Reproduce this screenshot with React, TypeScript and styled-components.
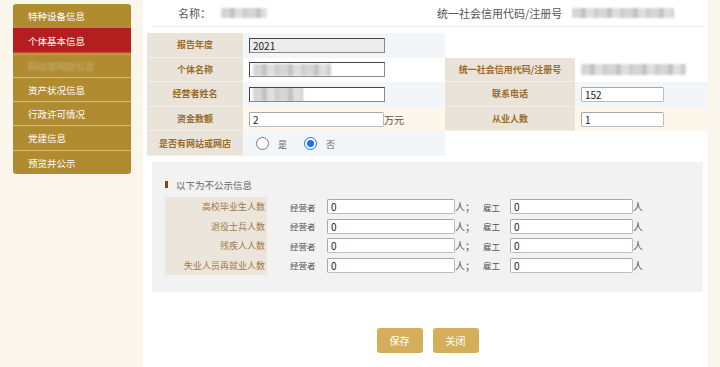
import * as React from "react";
import styled, { createGlobalStyle } from "styled-components";

const GlobalStyle = createGlobalStyle`
  html, body {
    margin: 0;
    padding: 0;
    background: #fbf6ec;
    font-family: "Noto Sans CJK SC", "Liberation Sans", sans-serif;
  }
  * { box-sizing: border-box; }
`;

const Page = styled.div`
  display: flex;
  align-items: flex-start;
  width: 720px;
  height: 367px;
  overflow: hidden;
`;

const Side = styled.ul`
  list-style: none;
  margin: 4px 0 0 13px;
  padding: 0;
  width: 118px;
  background: #b08b30;
  border-radius: 3px;
  overflow: hidden;
`;

const SideItem = styled.li<{ $active?: boolean; $muted?: boolean }>`
  height: 24.3px;
  line-height: 24px;
  padding-left: 15px;
  font-size: 9.5px;
  color: ${(p) => (p.$muted ? "#c9b27a" : "#fff")};
  background: ${(p) => (p.$active ? "#b31f1f" : "transparent")};
  border-top: 1px solid ${(p) => (p.$active ? "#b31f1f" : "#d7bc72")};
  &:first-child { border-top: none; }
  filter: ${(p) => (p.$muted ? "blur(1.2px)" : "none")};
`;

const Main = styled.div`
  margin-left: 12px;
  width: 565px;
  height: 367px;
  background: #fff;
  display: flex;
  flex-direction: column;
`;

const Header = styled.div`
  margin: 0 5px 0 9px;
  height: 27px;
  border-bottom: 1px solid #ececec;
  display: grid;
  grid-template-columns: 285px 1fr;
  align-items: center;
  font-size: 11px;
  color: #555;
`;

const HeadCell = styled.div<{ $pad: number }>`
  display: flex;
  align-items: center;
  padding-left: ${(p) => p.$pad}px;
  gap: 10px;
`;

const Blur = styled.span<{ $w: number; $h?: number }>`
  display: inline-block;
  width: ${(p) => p.$w}px;
  height: ${(p) => p.$h ?? 10}px;
  background: repeating-linear-gradient(90deg, #cfcfcf 0 9px, #b8b8b8 9px 14px, #dadada 14px 22px, #c4c4c4 22px 26px);
  filter: blur(1.3px);
  opacity: 0.85;
`;

const Table = styled.div`
  margin: 6px 0 0 4px;
  width: 561px;
  display: grid;
  grid-template-columns: 96px 202px 130px 133px;
`;

const Label = styled.div`
  height: 24.6px;
  background: #e9e3d9;
  border-bottom: 1px solid #f3efe8;
  display: flex;
  align-items: center;
  justify-content: center;
  font-size: 9px;
  font-weight: bold;
  color: #9a6b2a;
`;

const Value = styled.div<{ $bg: string }>`
  height: 24.6px;
  background: ${(p) => p.$bg};
  display: flex;
  align-items: center;
  padding-left: 6px;
  font-size: 10px;
  color: #333;
`;

const Empty = styled.div`
  grid-column: span 2;
  height: 24.6px;
  background: #fff;
`;

const Input = styled.div<{ $w: number; $ro?: boolean; $dark?: boolean }>`
  width: ${(p) => p.$w}px;
  height: 15px;
  display: flex;
  align-items: center;
  padding-left: 3px;
  font-size: 10px;
  color: #222;
  overflow: hidden;
  background: ${(p) => (p.$ro ? "#ececec" : "#fff")};
  border: 1px solid ${(p) => (p.$ro || p.$dark ? "#8a8a8a" : "#bdbdbd")};
  border-top-color: ${(p) => (p.$ro || p.$dark ? "#444" : "#a8a8a8")};
  border-left-color: ${(p) => (p.$ro || p.$dark ? "#444" : "#a8a8a8")};
  border-radius: ${(p) => (p.$ro || p.$dark ? "0" : "2px")};
`;

const Unit = styled.span`
  font-size: 10px;
  color: #555;
`;

const Radio = styled.span<{ $on?: boolean }>`
  width: 13px;
  height: 13px;
  border-radius: 50%;
  border: 1px solid ${(p) => (p.$on ? "#1a73e8" : "#777")};
  background: #fff;
  display: inline-flex;
  align-items: center;
  justify-content: center;
  &::after {
    content: "";
    width: 7px;
    height: 7px;
    border-radius: 50%;
    background: ${(p) => (p.$on ? "#1a73e8" : "transparent")};
  }
`;

const RadioText = styled.span`
  font-size: 9px;
  color: #666;
  margin: 2px 17px 0 9px;
`;

const Private = styled.div`
  margin: 6px 5px 0 9px;
  height: 130px;
  background: #f2f2f2;
  padding: 16px 0 0 13px;
`;

const Title = styled.div`
  display: flex;
  align-items: center;
  gap: 8px;
  font-size: 9.5px;
  color: #666;
  &::before {
    content: "";
    width: 3px;
    height: 7px;
    background: #7a4a12;
  }
`;

const SubTable = styled.div`
  margin-top: 5px;
  display: grid;
  grid-template-columns: 102px 23px 37px 128px 28px 27px 123px 14px;
  align-items: center;
`;

const SubLabel = styled.div`
  height: 19.5px;
  background: #ebe5dc;
  display: flex;
  align-items: center;
  justify-content: flex-end;
  padding-right: 2px;
  font-size: 9px;
  color: #a07a48;
`;

const Tag = styled.span<{ $col: number }>`
  grid-column: ${(p) => p.$col};
  font-size: 8.5px;
  color: #555;
`;

const Actions = styled.div`
  margin-top: 36px;
  display: flex;
  justify-content: center;
  gap: 10px;
  padding-left: 4px;
`;

const Button = styled.button`
  width: 46px;
  height: 25px;
  border: none;
  border-radius: 3px;
  background: #d5ae5a;
  color: #fff;
  font-family: inherit;
  font-size: 10px;
  padding: 0;
`;

const menu = ["特种设备信息", "个体基本信息", "网站或网店信息", "资产状况信息", "行政许可情况", "党建信息", "预览并公示"];

const rows = [
  { name: "高校毕业生人数" },
  { name: "退役士兵人数" },
  { name: "残疾人人数" },
  { name: "失业人员再就业人数" },
];

export default function App() {
  return (
    <Page>
      <GlobalStyle />
      <Side>
        {menu.map((m, i) => (
          <SideItem key={m} $active={i === 1} $muted={i === 2}>
            {m}
          </SideItem>
        ))}
      </Side>
      <Main>
        <Header>
          <HeadCell $pad={26}>
            名称：<Blur $w={46} />
          </HeadCell>
          <HeadCell $pad={0}>
            统一社会信用代码/注册号 <Blur $w={102} />
          </HeadCell>
        </Header>
        <Table>
          <Label>报告年度</Label>
          <Value $bg="#f3f6f9">
            <Input $w={136} $ro>2021</Input>
          </Value>
          <Empty />

          <Label>个体名称</Label>
          <Value $bg="#fff">
            <Input $w={136} $dark>
              <Blur $w={78} $h={12} />
            </Input>
          </Value>
          <Label>统一社会信用代码/注册号</Label>
          <Value $bg="#fff">
            <Blur $w={105} $h={11} />
          </Value>

          <Label>经营者姓名</Label>
          <Value $bg="#f3f6f9">
            <Input $w={136} $dark>
              <Blur $w={50} $h={16} />
            </Input>
          </Value>
          <Label>联系电话</Label>
          <Value $bg="#f3f6f9">
            <Input $w={83}>152</Input>
          </Value>

          <Label>资金数额</Label>
          <Value $bg="#fdf6ea">
            <Input $w={135}>2</Input>
            <Unit>万元</Unit>
          </Value>
          <Label>从业人数</Label>
          <Value $bg="#fdf6ea">
            <Input $w={83}>1</Input>
          </Value>

          <Label>是否有网站或网店</Label>
          <Value $bg="#f3f6f9" style={{ paddingLeft: 13 }}>
            <Radio />
            <RadioText>是</RadioText>
            <Radio $on />
            <RadioText>否</RadioText>
          </Value>
          <Empty />
        </Table>

        <Private>
          <Title>以下为不公示信息</Title>
          <SubTable>
            {rows.map((r) => (
              <React.Fragment key={r.name}>
                <SubLabel>{r.name}</SubLabel>
                <Tag $col={3}>经营者</Tag>
                <Input $w={128}>0</Input>
                <Unit>人；</Unit>
                <Tag $col={6}>雇工</Tag>
                <Input $w={123}>0</Input>
                <Unit>人</Unit>
              </React.Fragment>
            ))}
          </SubTable>
        </Private>

        <Actions>
          <Button>保存</Button>
          <Button>关闭</Button>
        </Actions>
      </Main>
    </Page>
  );
}
